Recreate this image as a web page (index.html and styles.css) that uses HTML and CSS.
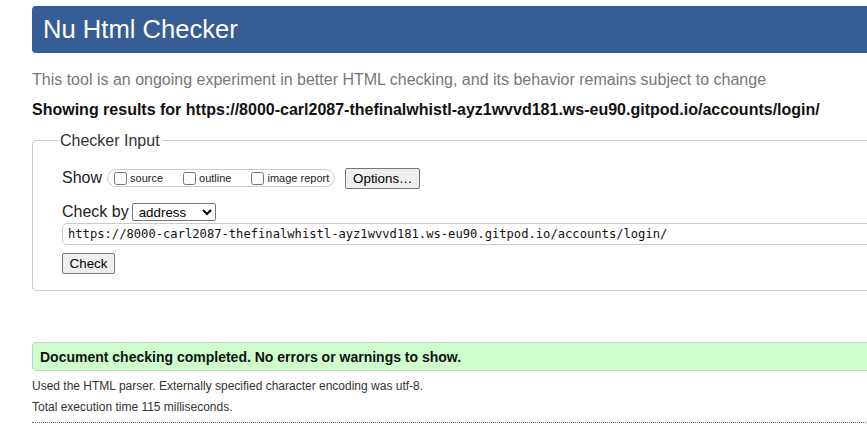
FILE: index.html
```html
<!DOCTYPE html>
<html lang="en">
<head>
<meta charset="utf-8">
<title>Nu Html Checker</title>
<link rel="stylesheet" href="styles.css">
</head>
<body>
<div class="page">
  <h1 class="title">Nu Html Checker</h1>
  <p class="subtitle">This tool is an ongoing experiment in better HTML checking, and its behavior remains subject to change</p>
  <p class="showing">Showing results for https://8000-carl2087-thefinalwhistl-ayz1wvvd181.ws-eu90.gitpod.io/accounts/login/</p>
  <fieldset class="input-box">
    <legend class="legend">Checker Input</legend>
    <div class="row row-show">
      <span class="row-label">Show</span>
      <span class="pill">
        <label class="opt"><input type="checkbox" class="cb">source</label>
        <label class="opt"><input type="checkbox" class="cb">outline</label>
        <label class="opt last"><input type="checkbox" class="cb">image report</label>
      </span>
      <button type="button" class="btn btn-options">Options…</button>
    </div>
    <div class="row row-by">
      <span class="row-label">Check by</span>
      <select class="sel"><option>address</option></select>
    </div>
    <input type="text" class="url" value="https://8000-carl2087-thefinalwhistl-ayz1wvvd181.ws-eu90.gitpod.io/accounts/login/">
    <button type="button" class="btn btn-check">Check</button>
  </fieldset>
  <p class="success">Document checking completed. No errors or warnings to show.</p>
  <p class="details">Used the HTML parser. Externally specified character encoding was utf-8.</p>
  <p class="details second">Total execution time 115 milliseconds.</p>
  <hr class="dotted">
</div>
</body>
</html>
```
FILE: styles.css
```css
html, body {
  margin: 0;
  padding: 0;
  overflow: hidden;
  background: #fff;
}
body {
  font-family: "Liberation Sans", Arial, sans-serif;
  font-size: 16px;
  color: #222;
}
.page {
  width: 1000px;
  padding-left: 32px;
}
.title {
  margin: 6px 0 0;
  height: 47px;
  line-height: 47px;
  padding-left: 11px;
  background: #365d95;
  color: #fff;
  font-size: 25.6px;
  font-weight: normal;
  border-radius: 4px;
}
.subtitle {
  margin: 17px 0 0;
  line-height: 19px;
  color: #777;
}
.showing {
  margin: 11px 0 0;
  line-height: 19px;
  font-weight: bold;
  color: #111;
}
.input-box {
  margin: 12px 0 0;
  padding: 0 0 16px 29px;
  border: 1px solid #ccc;
  border-radius: 4px;
}
.legend {
  margin-left: -4px;
  padding: 0 2px;
  line-height: 19px;
  color: #333;
}
.row {
  display: flex;
  align-items: center;
}
.row-show {
  margin-top: 17px;
  height: 22px;
}
.row-by {
  margin-top: 12px;
  height: 21px;
}
.row-label {
  color: #222;
  margin-right: 5px;
}
.row-by .row-label {
  margin-right: 3px;
}
.pill {
  display: flex;
  align-items: center;
  height: 16px;
  border: 1px solid #ccc;
  border-radius: 9px;
  padding: 0 5px 0 2px;
  font-size: 11px;
}
.opt {
  display: flex;
  align-items: center;
  margin-right: 16px;
  color: #222;
}
.opt.last {
  margin-right: 0;
}
.cb {
  width: 13px;
  height: 13px;
  margin: 0 3px 0 4px;
}
.btn {
  font-family: "Liberation Sans", Arial, sans-serif;
  font-size: 13.33px;
  background: #efefef;
  border: 1px solid #767676;
  border-radius: 2px;
  color: #000;
  height: 21px;
  padding: 0 6px;
}
.btn-options {
  margin-left: 10px;
  width: 75px;
}
.sel {
  font-family: "Liberation Sans", Arial, sans-serif;
  font-size: 13.33px;
  width: 84px;
  height: 18px;
  border: 1px solid #767676;
  border-radius: 2px;
  background: #fff;
  color: #000;
  padding: 0 0 0 2px;
}
.url {
  display: block;
  box-sizing: border-box;
  margin: 1px 0 0;
  width: 960px;
  height: 22px;
  border: 1px solid #ccc;
  border-radius: 5px;
  padding: 0 5px;
  font-family: "DejaVu Sans Mono", monospace;
  font-size: 12.15px;
  color: #111;
}
.btn-check {
  display: block;
  margin-top: 8px;
  width: 53px;
}
.success {
  margin: 51px 0 0;
  height: 27px;
  line-height: 28px;
  padding-left: 7px;
  background: #ccffcc;
  border: 1px solid #ccc;
  border-radius: 4px;
  font-size: 14px;
  font-weight: bold;
  color: #111;
}
.details {
  margin: 8px 0 0;
  font-size: 12px;
  line-height: 14px;
  color: #333;
}
.details.second {
  margin-top: 7px;
}
.dotted {
  margin: 8px 0 0;
  border: 0;
  border-top: 1px dotted #666;
  height: 0;
}
```
